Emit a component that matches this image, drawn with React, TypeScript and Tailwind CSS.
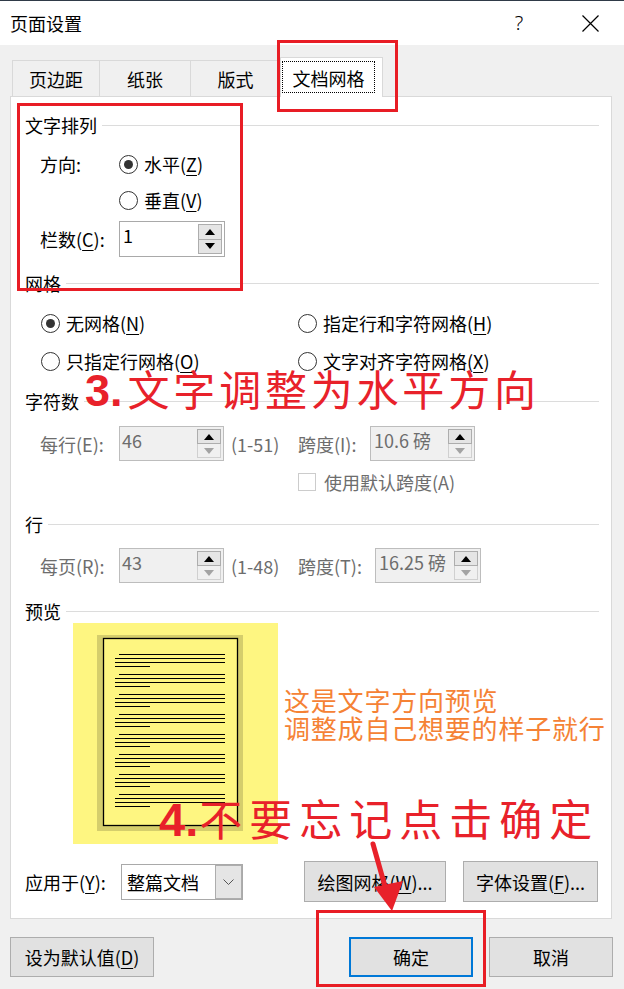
import React from "react";

const U = ({ c }: { c: string }) => (
  <span className="underline decoration-1 underline-offset-[3px]">{c}</span>
);

const Radio = ({ on }: { on?: boolean }) => (
  <div className="flex h-[19px] w-[19px] shrink-0 items-center justify-center rounded-full border border-[#333333] bg-white">
    {on && <div className="h-[9px] w-[9px] rounded-full bg-[#333333]" />}
  </div>
);

const Tri = ({ down, gray }: { down?: boolean; gray?: boolean }) => (
  <svg width="10" height="6" viewBox="0 0 10 6">
    <path d={down ? "M0 0H10L5 6Z" : "M0 6H10L5 0Z"} fill={gray ? "#a3a3a3" : "#000"} />
  </svg>
);

const SpinBtns = ({ disabled }: { disabled?: boolean }) => (
  <div className="my-[2px] mr-[2px] flex w-[24px] flex-col">
    <div className="flex flex-1 items-center justify-center border border-[#adadad] bg-[#e5e5e5]">
      <Tri />
    </div>
    <div
      className={
        disabled
          ? "flex flex-1 items-center justify-center border border-t-0 border-[#d0d0d0] bg-[#f0f0f0]"
          : "flex flex-1 items-center justify-center border border-t-0 border-[#adadad] bg-[#e5e5e5]"
      }
    >
      <Tri down gray={disabled} />
    </div>
  </div>
);

const Header = ({ t }: { t: string }) => (
  <div className="flex h-[24px] items-center">
    <span>{t}</span>
    <div className="ml-[5px] h-px flex-1 bg-[#dcdcdc]" />
  </div>
);

const Btn = ({ children, cls }: { children: React.ReactNode; cls: string }) => (
  <div className={`flex items-center justify-center border border-[#adadad] bg-[#e1e1e1] ${cls}`}>{children}</div>
);

export default function App() {
  const groups = [0, 1, 2, 3, 4, 5, 6, 7];
  return (
    <div className="relative h-[989px] w-[624px] overflow-hidden bg-[#f0f0f0] font-['Microsoft_YaHei_UI','Noto_Sans_CJK_SC','Noto_Sans',sans-serif] text-[18px] leading-none text-black">
      <div className="h-px bg-[#2f3a47]" />
      {/* title bar */}
      <div className="flex h-[44px] items-center bg-white pl-[10px] pr-[11px]">
        <span>页面设置</span>
        <span className="ml-auto w-[24px] text-center font-['Noto_Sans',sans-serif] text-[20px] font-light">?</span>
        <div className="ml-[36px] flex w-[46px] justify-center">
          <svg width="17" height="17" viewBox="0 0 17 17">
            <path d="M0.5 0.5L16.5 16.5M16.5 0.5L0.5 16.5" stroke="#000" strokeWidth="1.2" />
          </svg>
        </div>
      </div>

      <div className="pl-[10px]">
        {/* tabs */}
        <div className="mt-[12px] flex items-end pl-[2px]">
          <div className="flex h-[36px] w-[87px] items-center justify-center border-l border-t border-[#d9d9d9] pt-[1px]">页边距</div>
          <div className="flex h-[36px] w-[91px] items-center justify-center border-l border-t border-[#d9d9d9] pt-[1px]">纸张</div>
          <div className="flex h-[36px] w-[91px] items-center justify-center border-l border-r border-t border-[#d9d9d9] pt-[1px]">版式</div>
          <div className="relative z-10 -mb-px -ml-px h-[40px] w-[103px] border-l border-r border-t border-[#d9d9d9] bg-white">
            <div className="ml-[1px] mt-[3px] flex h-[32px] w-[93px] items-center justify-center border border-dotted border-black pt-[1px]">
              文档网格
            </div>
          </div>
        </div>

        {/* panel */}
        <div className="w-[602px] border border-[#d9d9d9] bg-white pb-[16px] pl-[14px] pr-[12px]">
          <div className="mt-[16px]">
            <Header t="文字排列" />
          </div>
          <div className="mt-[12px] flex h-[30px] items-center pl-[15px]">
            <span className="w-[79px]">方向:</span>
            <Radio on />
            <span className="ml-[6px]">
              水平(<U c="Z" />)
            </span>
          </div>
          <div className="mt-[6px] flex h-[30px] items-center pl-[94px]">
            <Radio />
            <span className="ml-[6px]">
              垂直(<U c="V" />)
            </span>
          </div>
          <div className="mt-[6px] flex h-[36px] items-center pl-[15px]">
            <span className="w-[79px]">
              栏数(<U c="C" />):
            </span>
            <div className="flex h-[36px] w-[106px] border border-[#a9a9a9] bg-white">
              <span className="flex-1 pl-[3px] pt-[4px]">1</span>
              <SpinBtns />
            </div>
          </div>

          <div className="mt-[14px]">
            <Header t="网格" />
          </div>
          <div className="mt-[13px] flex h-[30px] items-center pl-[16px]">
            <div className="flex w-[257px] items-center">
              <Radio on />
              <span className="ml-[6px]">
                无网格(<U c="N" />)
              </span>
            </div>
            <Radio />
            <span className="ml-[6px]">
              指定行和字符网格(<U c="H" />)
            </span>
          </div>
          <div className="mt-[8px] flex h-[30px] items-center pl-[16px]">
            <div className="flex w-[257px] items-center">
              <Radio />
              <span className="ml-[6px]">
                只指定行网格(<U c="O" />)
              </span>
            </div>
            <Radio />
            <span className="ml-[6px]">
              文字对齐字符网格(<U c="X" />)
            </span>
          </div>

          <div className="mt-[13px]">
            <Header t="字符数" />
          </div>
          <div className="mt-[13px] flex h-[35px] items-center pl-[15px] text-[#6d6d6d]">
            <span className="w-[79px]">每行(E):</span>
            <div className="flex h-[35px] w-[105px] border border-[#bdbdbd] bg-[#f0f0f0]">
              <span className="flex-1 pl-[2px] pt-[4px]">46</span>
              <SpinBtns disabled />
            </div>
            <span className="w-[74px] pl-[7px]">(1-51)</span>
            <span className="w-[72px]">跨度(I):</span>
            <div className="flex h-[35px] w-[105px] border border-[#bdbdbd] bg-[#f0f0f0]">
              <span className="flex-1 pl-[3px] pt-[4px]">10.6 磅</span>
              <SpinBtns disabled />
            </div>
          </div>
          <div className="mt-[9px] flex h-[24px] items-center pl-[273px] text-[#6d6d6d]">
            <div className="h-[18px] w-[18px] border border-[#cccccc] bg-white" />
            <span className="ml-[8px]">使用默认跨度(A)</span>
          </div>

          <div className="mt-[18px]">
            <Header t="行" />
          </div>
          <div className="mt-[12px] flex h-[35px] items-center pl-[15px] text-[#6d6d6d]">
            <span className="w-[79px]">每页(R):</span>
            <div className="flex h-[35px] w-[105px] border border-[#bdbdbd] bg-[#f0f0f0]">
              <span className="flex-1 pl-[2px] pt-[4px]">43</span>
              <SpinBtns disabled />
            </div>
            <span className="w-[74px] pl-[7px]">(1-48)</span>
            <span className="w-[77px]">跨度(T):</span>
            <div className="flex h-[35px] w-[106px] border border-[#bdbdbd] bg-[#f0f0f0]">
              <span className="flex-1 pl-[3px] pt-[4px]">16.25 磅</span>
              <SpinBtns disabled />
            </div>
          </div>

          <div className="mt-[16px]">
            <Header t="预览" />
          </div>
          <div className="ml-[48px] h-[221px] w-[205px] bg-[#fef681]">
            <svg width="205" height="221" viewBox="0 0 205 221">
              <rect x="24" y="12" width="146" height="196" fill="#d5ce6c" />
              <rect x="30.5" y="15.5" width="134" height="187" fill="#fef681" stroke="#000" strokeWidth="1.3" />
              {groups.map((g) => {
                const y = 31.5 + g * 20;
                return (
                  <g key={g} stroke="#000" strokeWidth="1.2">
                    <line x1="46" y1={y} x2="152" y2={y} />
                    <line x1="42" y1={y + 4} x2="152" y2={y + 4} />
                    <line x1="42" y1={y + 8} x2="152" y2={y + 8} />
                    <line x1="42" y1={y + 12} x2="77" y2={y + 12} />
                  </g>
                );
              })}
            </svg>
          </div>

          <div className="mt-[17px] flex h-[41px] items-center">
            <span className="w-[96px]">
              应用于(<U c="Y" />):
            </span>
            <div className="flex h-[36px] w-[122px] border border-[#a9a9a9] bg-white">
              <span className="flex flex-1 items-center pl-[5px]">整篇文档</span>
              <div className="flex w-[27px] items-center justify-center border border-[#adadad] bg-[#e5e5e5]">
                <svg width="11" height="6" viewBox="0 0 11 6">
                  <path d="M0.5 0.5L5.5 5.5L10.5 0.5" fill="none" stroke="#555" strokeWidth="1" />
                </svg>
              </div>
            </div>
            <Btn cls="ml-[61px] h-[41px] w-[142px]">
              绘图网格(<U c="W" />)...
            </Btn>
            <Btn cls="ml-[17px] h-[41px] w-[135px]">
              字体设置(<U c="F" />)...
            </Btn>
          </div>
        </div>

        {/* bottom buttons */}
        <div className="mt-[18px] flex h-[40px]">
          <Btn cls="h-[40px] w-[144px]">
            设为默认值(<U c="D" />)
          </Btn>
          <div className="ml-[195px] flex h-[40px] w-[124px] items-center justify-center border-2 border-[#0078d7] bg-[#e1e1e1]">
            确定
          </div>
          <Btn cls="ml-[16px] h-[40px] w-[124px]">取消</Btn>
        </div>
      </div>

      {/* annotations */}
      <div className="absolute left-[277px] top-[40px] h-[72px] w-[121px] border-[3px] border-[#e81d25]" />
      <div className="absolute left-[17px] top-[103px] h-[188px] w-[226px] border-[3px] border-[#e81d25]" />
      <div className="absolute left-[316px] top-[910px] h-[77px] w-[170px] border-[3px] border-[#e81d25]" />

      <div className="absolute left-[85px] top-[367px] flex items-baseline whitespace-nowrap leading-none text-[#e8212a]">
        <span className="font-['Liberation_Sans',sans-serif] text-[45px] font-bold">3.</span>
        <span className="ml-[5px] font-['Noto_Sans_CJK_SC',sans-serif] text-[42px] tracking-[3.8px]">文字调整为水平方向</span>
      </div>

      <div className="absolute left-[159px] top-[796px] flex items-baseline whitespace-nowrap leading-none text-[#e8212a]">
        <span className="font-['Liberation_Sans',sans-serif] text-[47px] font-bold">4.</span>
        <span className="ml-[1px] font-['Noto_Sans_CJK_SC',sans-serif] text-[43px] tracking-[7px]">不要忘记点击确定</span>
      </div>

      <div className="absolute left-[284px] top-[686px] whitespace-nowrap font-['Noto_Sans_CJK_SC',sans-serif] text-[26px] leading-[28px] tracking-[0.8px] text-[#f58235]">
        <div>这是文字方向预览</div>
        <div>调整成自己想要的样子就行</div>
      </div>

      <svg className="absolute left-[350px] top-[830px]" width="70" height="90" viewBox="0 0 70 90">
        <line x1="23" y1="14" x2="36" y2="60" stroke="#e8212a" strokeWidth="5" strokeLinecap="round" />
        <polygon points="42,81 24,57 53,51" fill="#e8212a" />
      </svg>
    </div>
  );
}
